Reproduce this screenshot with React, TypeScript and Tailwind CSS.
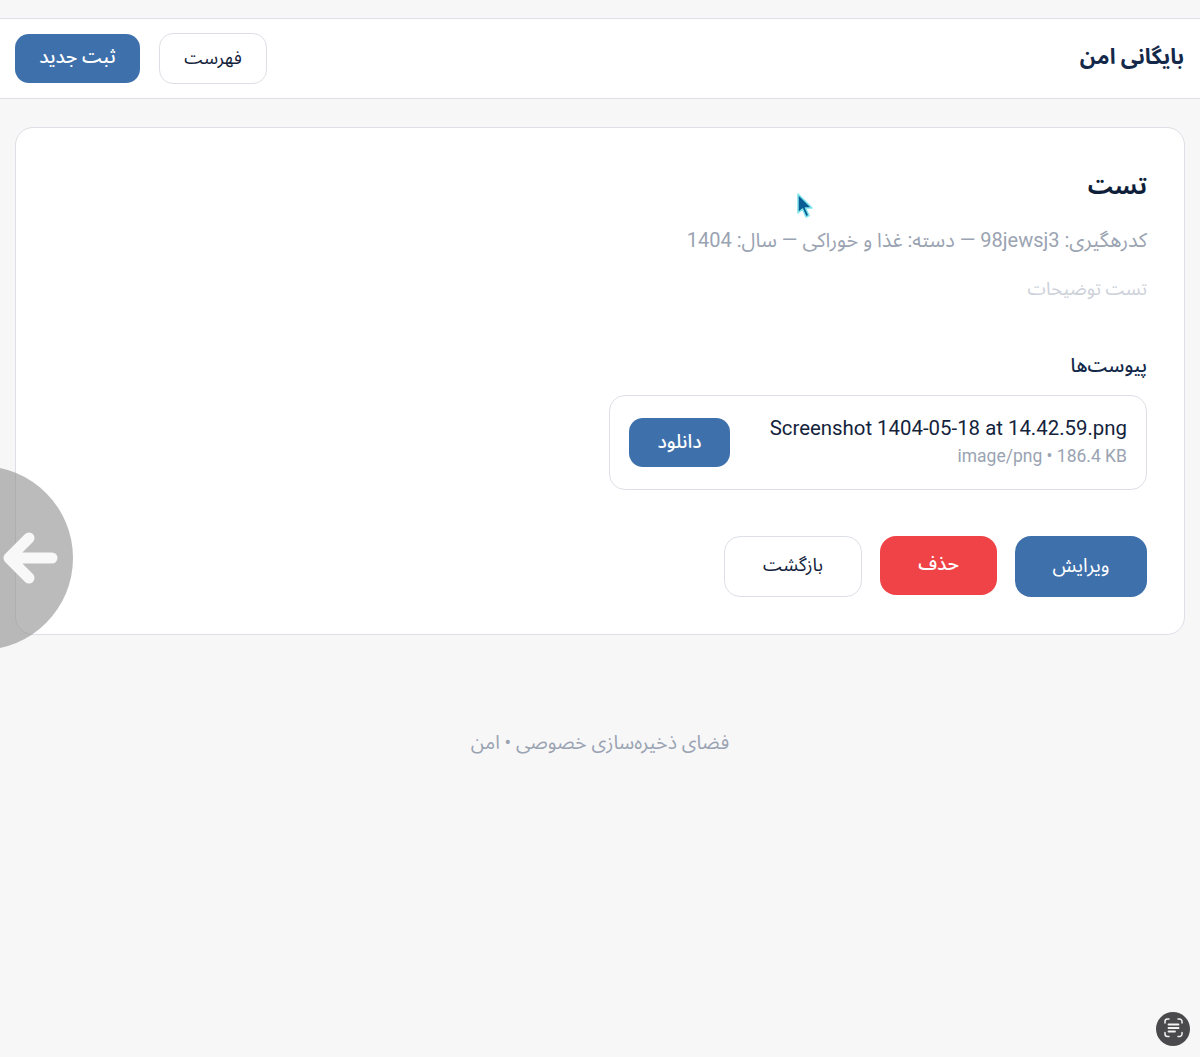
import React from 'react';

const fontStack = 'font-["Roboto","Noto_Sans_Arabic","Vazirmatn","DejaVu_Sans",sans-serif]';

const ScanIcon = () => (
  <svg viewBox="0 0 34 34" className="w-[34px] h-[34px]" fill="none" stroke="#f3f3f3" strokeWidth="1.5" strokeLinecap="round" strokeLinejoin="round">
    <path d="M9 11V9.500A2.500 2.500 0 0 1 11.500 7H13M22 7h1.500A2.500 2.500 0 0 1 26 9.500V11M26 20.500V22a2.500 2.500 0 0 1-2.500 2.500H22M13 24.500h-1.500A2.500 2.500 0 0 1 9 22v-1.500" />
    <path d="M12.500 12.500h10M12.500 16h10M12.500 19.500h6.500" strokeWidth="1.800" />
  </svg>
);

const BackArrow = () => (
  <svg viewBox="0 0 56 52" className="w-[56px] h-[52px]" fill="none" stroke="#f8f8f8" strokeWidth="11" strokeLinecap="round" strokeLinejoin="round">
    <path d="M50 26H7M27 6 7 26l20 20" />
  </svg>
);

const CursorIcon = () => (
  <svg viewBox="0 0 20 28" className="w-[20px] h-[28px]">
    <path d="M3 2v19l4.500-4 3.500 8 3-1.500-3.500-7.500h6.500z" fill="#0a5c94" stroke="#7fe3ea" strokeWidth="1.500" strokeLinejoin="round" />
  </svg>
);

const App: React.FC = () => {
  return (
    <div dir="rtl" className={`relative h-[1057px] overflow-hidden bg-[#f7f7f8] ${fontStack} text-[#14233c]`}>
      <div className="h-[18px]" />
      <header className="h-[81px] bg-white border-y border-[#dcdfe5] flex items-center justify-between pl-[15px] pr-[16px]">
        <h1 className="text-[21.5px] font-bold text-[#14294a] pb-[2px]">بایگانی امن</h1>
        <div className="flex items-center gap-[19px]">
          <button className="w-[108px] h-[51px] rounded-[14px] bg-white border border-[#dcdfe5] text-[18px] pb-[2px]">فهرست</button>
          <button className="w-[125px] h-[49px] rounded-[14px] bg-[#3e70ac] text-white text-[19px] font-medium pb-[2px]">ثبت جدید</button>
        </div>
      </header>

      <main className="px-[15px] pt-[28px]">
        <section className="h-[508px] bg-white border border-[#dcdfe5] rounded-[18px] pt-[40px] px-[37px]">
          <h2 className="text-[23.500px] leading-[36px] font-bold text-[#0f1f3a]">تست</h2>
          <p className="mt-[24px] text-[20px] leading-[24px] text-[#9aa3b2]">کدرهگیری: 98jewsj3 — دسته: غذا و خوراکی — سال: 1404</p>
          <p className="mt-[25px] text-[18.5px] leading-[24px] text-[#ccd1da]">تست توضیحات</p>
          <h3 className="mt-[52px] text-[19px] leading-[26px] font-medium text-[#14294a]">پیوست‌ها</h3>

          <div className="mt-[16px] w-[538px] h-[95px] rounded-[16px] border border-[#dcdfe5] flex items-center justify-between px-[19px]">
            <div dir="ltr" className="text-right pb-[3px]">
              <div className="text-[20.4px] leading-[28px] text-[#14233c]">Screenshot 1404-05-18 at 14.42.59.png</div>
              <div className="mt-[2px] text-[17.5px] leading-[24px] text-[#9aa3b2]">image/png • 186.4 KB</div>
            </div>
            <button className="w-[101px] h-[49px] rounded-[14px] bg-[#3e70ac] text-white text-[19px] font-medium">دانلود</button>
          </div>

          <div className="mt-[46px] flex items-start gap-[18px]">
            <button className="w-[132px] h-[61px] rounded-[16px] bg-[#3e70ac] text-white text-[19.500px] pb-[1px]">ویرایش</button>
            <button className="w-[117px] h-[59px] rounded-[16px] bg-[#f04347] text-white text-[19px] font-medium pb-[3px]">حذف</button>
            <button className="w-[138px] h-[61px] rounded-[16px] bg-white border border-[#dcdfe5] text-[18.5px] pb-[1px]">بازگشت</button>
          </div>
        </section>
      </main>

      <footer className="mt-[94px] text-center text-[19.4px] leading-[28px] text-[#9aa3b2]">فضای ذخیره‌سازی خصوصی • امن</footer>

      {/* screen recorder overlays */}
      <div dir="ltr" className="absolute left-[-111px] top-[466px] w-[184px] h-[184px] rounded-full bg-[#8f8d8d]/60 flex items-center justify-end pr-[15px]">
        <BackArrow />
      </div>
      <div className="absolute left-[795px] top-[192px]">
        <CursorIcon />
      </div>
      <div className="absolute left-[1156px] top-[1012px] w-[34px] h-[34px] rounded-full bg-[#4a4a4c]">
        <ScanIcon />
      </div>
    </div>
  );
};

export default App;
